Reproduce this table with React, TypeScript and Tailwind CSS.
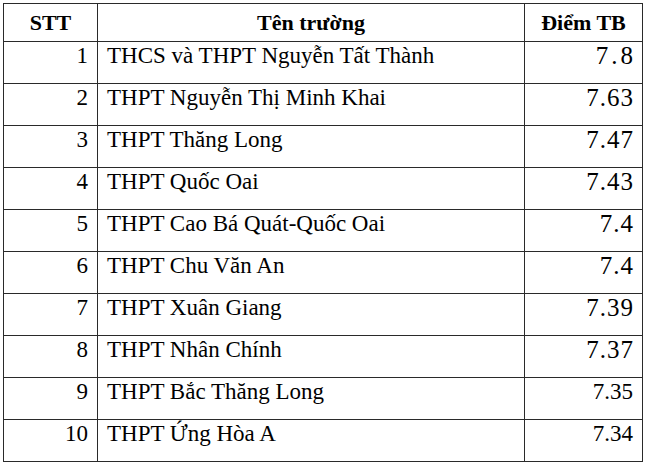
const rows: { n: number; name: string; score: string; size: string }[] = [
  { n: 1, name: "THCS và THPT Nguyễn Tất Thành", score: "7.8", size: "text-[25px] tracking-[3px] -mr-[3px]" },
  { n: 2, name: "THPT Nguyễn Thị Minh Khai", score: "7.63", size: "text-[25px] tracking-[1px] -mr-[1px]" },
  { n: 3, name: "THPT Thăng Long", score: "7.47", size: "text-[25px] tracking-[1px] -mr-[1px]" },
  { n: 4, name: "THPT Quốc Oai", score: "7.43", size: "text-[25px] tracking-[1px] -mr-[1px]" },
  { n: 5, name: "THPT Cao Bá Quát-Quốc Oai", score: "7.4", size: "text-[25px] tracking-[1px] -mr-[1px]" },
  { n: 6, name: "THPT Chu Văn An", score: "7.4", size: "text-[25px] tracking-[1px] -mr-[1px]" },
  { n: 7, name: "THPT Xuân Giang", score: "7.39", size: "text-[25px] tracking-[1px] -mr-[1px]" },
  { n: 8, name: "THPT Nhân Chính", score: "7.37", size: "text-[25px] tracking-[1px] -mr-[1px]" },
  { n: 9, name: "THPT Bắc Thăng Long", score: "7.35", size: "text-[23px]" },
  { n: 10, name: "THPT Ứng Hòa A", score: "7.34", size: "text-[23px]" },
];

export default function App() {
  return (
    <div className="w-[645px] h-[470px] bg-white pt-[3px] pl-[3px] text-black font-[family-name:'Liberation_Serif','Times_New_Roman',serif]">
      <table className="table-fixed border-collapse w-[639px]">
        <colgroup>
          <col className="w-[94px]" />
          <col className="w-[427px]" />
          <col className="w-[118px]" />
        </colgroup>
        <thead>
          <tr className="h-[38px]">
            <th className="border border-[#2a2a2a] text-[22px] font-bold text-center align-middle p-0 leading-none">STT</th>
            <th className="border border-[#2a2a2a] text-[22px] font-bold text-center align-middle p-0 leading-none">Tên trường</th>
            <th className="border border-[#2a2a2a] text-[22px] font-bold text-center align-middle p-0 leading-none">Điểm TB</th>
          </tr>
        </thead>
        <tbody>
          {rows.map((r) => (
            <tr key={r.n} className="h-[42px]">
              <td className="border border-[#2a2a2a] align-top text-right text-[23px] leading-[26px] pt-[1px] pr-[9px]">{r.n}</td>
              <td className="border border-[#2a2a2a] align-top text-left text-[23px] leading-[26px] pt-[1px] pl-[9px]">{r.name}</td>
              <td className="border border-[#2a2a2a] align-top text-right text-[23px] leading-[26px] pt-[1px] pr-[9px]">
                <span className={r.size}>{r.score}</span>
              </td>
            </tr>
          ))}
        </tbody>
      </table>
    </div>
  );
}
